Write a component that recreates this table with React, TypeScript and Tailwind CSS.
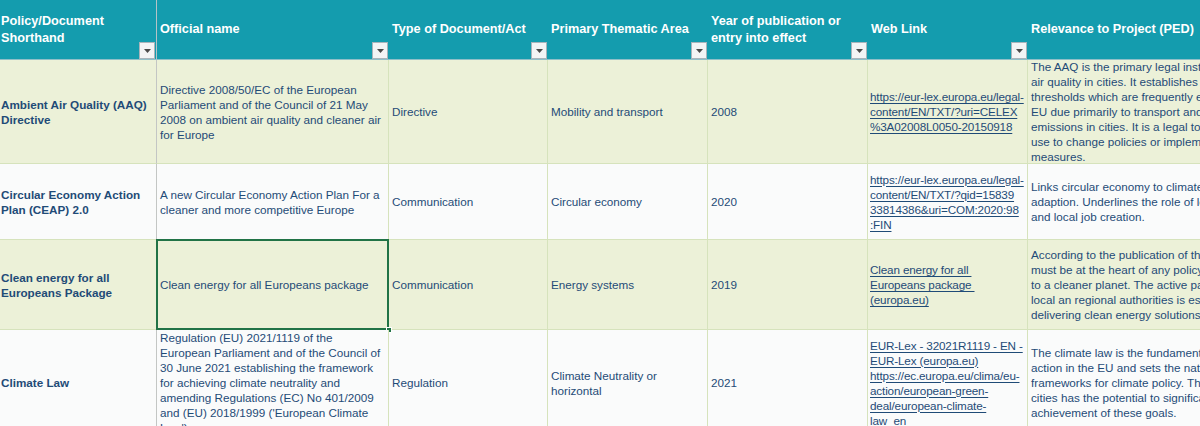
const COLS = [
  'Policy/Document Shorthand',
  'Official name',
  'Type of Document/Act',
  'Primary Thematic Area',
  'Year of publication or entry into effect',
  'Web Link',
  'Relevance to Project (PED)',
];

const HEAD_LINES: string[][] = [
  ['Policy/Document', 'Shorthand'],
  ['Official name'],
  ['Type of Document/Act'],
  ['Primary Thematic Area'],
  ['Year of publication or', 'entry into effect'],
  ['Web Link'],
  ['Relevance to Project (PED)'],
];

type Row = {
  h: string;
  shade: boolean;
  short: string[];
  name: string[];
  type: string;
  area: string[];
  year: string;
  links: string[][];
  relevance: string[];
};

const ROWS: Row[] = [
  {
    h: 'h-[104px]',
    shade: true,
    short: ['Ambient Air Quality (AAQ)', 'Directive'],
    name: [
      'Directive 2008/50/EC of the European',
      'Parliament and of the Council of 21 May',
      '2008 on ambient air quality and cleaner air',
      'for Europe',
    ],
    type: 'Directive',
    area: ['Mobility and transport'],
    year: '2008',
    links: [['https://eur-lex.europa.eu/legal-', 'content/EN/TXT/?uri=CELEX', '%3A02008L0050-20150918']],
    relevance: [
      'The AAQ is the primary legal instrument regulating',
      'air quality in cities. It establishes limit values and',
      'thresholds which are frequently exceeded across the',
      'EU due primarily to transport and industrial',
      'emissions in cities. It is a legal tool that cities can',
      'use to change policies or implement mitigation',
      'measures.',
    ],
  },
  {
    h: 'h-[76px]',
    shade: false,
    short: ['Circular Economy Action', 'Plan (CEAP) 2.0'],
    name: ['A new Circular Economy Action Plan For a', 'cleaner and more competitive Europe'],
    type: 'Communication',
    area: ['Circular economy'],
    year: '2020',
    links: [['https://eur-lex.europa.eu/legal-', 'content/EN/TXT/?qid=15839', '33814386&uri=COM:2020:98', ':FIN']],
    relevance: [
      'Links circular economy to climate change mitigation and',
      'adaption. Underlines the role of local businesses',
      'and local job creation.',
    ],
  },
  {
    h: 'h-[90px]',
    shade: true,
    short: ['Clean energy for all', 'Europeans Package'],
    name: ['Clean energy for all Europeans package'],
    type: 'Communication',
    area: ['Energy systems'],
    year: '2019',
    links: [['Clean energy for all\u00a0', 'Europeans package\u00a0', '(europa.eu)']],
    relevance: [
      'According to the publication of the EC, citizens',
      'must be at the heart of any policy for the transition',
      'to a cleaner planet. The active participation of',
      'local an regional authorities is essential in',
      'delivering clean energy solutions.',
    ],
  },
  {
    h: 'h-[106px]',
    shade: false,
    short: ['Climate Law'],
    name: [
      'Regulation (EU) 2021/1119 of the',
      'European Parliament and of the Council of',
      '30 June 2021 establishing the framework',
      'for achieving climate neutrality and',
      'amending Regulations (EC) No 401/2009',
      "and (EU) 2018/1999 ('European Climate",
      "Law')",
    ],
    type: 'Regulation',
    area: ['Climate Neutrality or', 'horizontal'],
    year: '2021',
    links: [
      ['EUR-Lex - 32021R1119 - EN -', 'EUR-Lex (europa.eu)'],
      ['https://ec.europa.eu/clima/eu-', 'action/european-green-', 'deal/european-climate-', 'law_en'],
    ],
    relevance: [
      'The climate law is the fundamental basis for climate',
      'action in the EU and sets the national and local',
      'frameworks for climate policy. The involvement of',
      'cities has the potential to significantly contribute to the',
      'achievement of these goals.',
    ],
  },
];

function FilterButton() {
  return (
    <div className="absolute bottom-0 right-[1px] flex h-[17px] w-[16px] items-center justify-center border border-[#a9b4bb] bg-[#f3f4f5]">
      <svg width="7" height="4" viewBox="0 0 7 4">
        <path d="M0 0h7L3.5 4z" fill="#4a4a4a" />
      </svg>
    </div>
  );
}

function Lines({ lines }: { lines: string[] }) {
  return (
    <div className="whitespace-nowrap">
      {lines.map((l, i) => (
        <div key={i}>{l}</div>
      ))}
    </div>
  );
}

export default function App() {
  const cellBase = 'flex items-center overflow-hidden border-b border-[#d6e3bc] pl-[3px] leading-[15px]';

  return (
    <div className="h-[426px] w-[1200px] overflow-hidden bg-[#fafbfb] font-['Liberation_Sans',Arial,sans-serif] text-[11.7px] text-[#1f4b77]">
      <div className="grid w-[1428px] grid-cols-[157px_232px_159px_160px_160px_160px_400px]">
        {HEAD_LINES.map((lines, i) => (
          <div
            key={COLS[i]}
            className={`relative flex h-[60px] items-center border-b border-[#8fbfc8] bg-[#149cae] text-[12.7px] font-bold leading-[16.5px] text-white ${
              i === 0 ? 'border-r border-r-[#b5c3c7] pl-[1px]' : 'pl-[3px]'
            }`}
          >
            <Lines lines={lines} />
            {i < 6 ? <FilterButton /> : null}
          </div>
        ))}

        {ROWS.map((r, ri) => {
          const bg = r.shade ? 'bg-[#ecf1d8]' : 'bg-[#fafbfb]';
          const sep = 'border-r border-r-[#d6e3bc]';
          return [
            <div key={`${ri}-0`} className={`${cellBase} ${bg} ${r.h} border-r border-r-[#c3c6c4] !pl-[1px] font-bold`}>
              <Lines lines={r.short} />
            </div>,
            <div key={`${ri}-1`} className={`${cellBase} ${bg} ${r.h} ${sep} relative overflow-visible`}>
              <Lines lines={r.name} />
              {ri === 2 ? (
                <>
                  <div className="pointer-events-none absolute -left-[1px] -top-[1px] bottom-[-1px] right-[-1px] border-2 border-[#217346]" />
                  <div className="absolute -bottom-[4px] -right-[4px] h-[6px] w-[6px] border border-white bg-[#217346]" />
                </>
              ) : null}
            </div>,
            <div key={`${ri}-2`} className={`${cellBase} ${bg} ${r.h} ${sep}`}>
              {r.type}
            </div>,
            <div key={`${ri}-3`} className={`${cellBase} ${bg} ${r.h} ${sep}`}>
              <Lines lines={r.area} />
            </div>,
            <div key={`${ri}-4`} className={`${cellBase} ${bg} ${r.h} ${sep}`}>
              {r.year}
            </div>,
            <div key={`${ri}-5`} className={`${cellBase} ${bg} ${r.h} ${sep} !pl-[2px]`}>
              <div className="whitespace-nowrap tracking-[-0.15px]">
                {r.links.map((link, li) => (
                  <div key={li}>
                    {link.map((l, k) => (
                      <div key={k}>
                        <span className="underline decoration-[#1f4b77] underline-offset-[2px]">{l}</span>
                      </div>
                    ))}
                  </div>
                ))}
              </div>
            </div>,
            <div key={`${ri}-6`} className={`${cellBase} ${bg} ${r.h}`}>
              <Lines lines={r.relevance} />
            </div>,
          ];
        })}
      </div>
    </div>
  );
}
